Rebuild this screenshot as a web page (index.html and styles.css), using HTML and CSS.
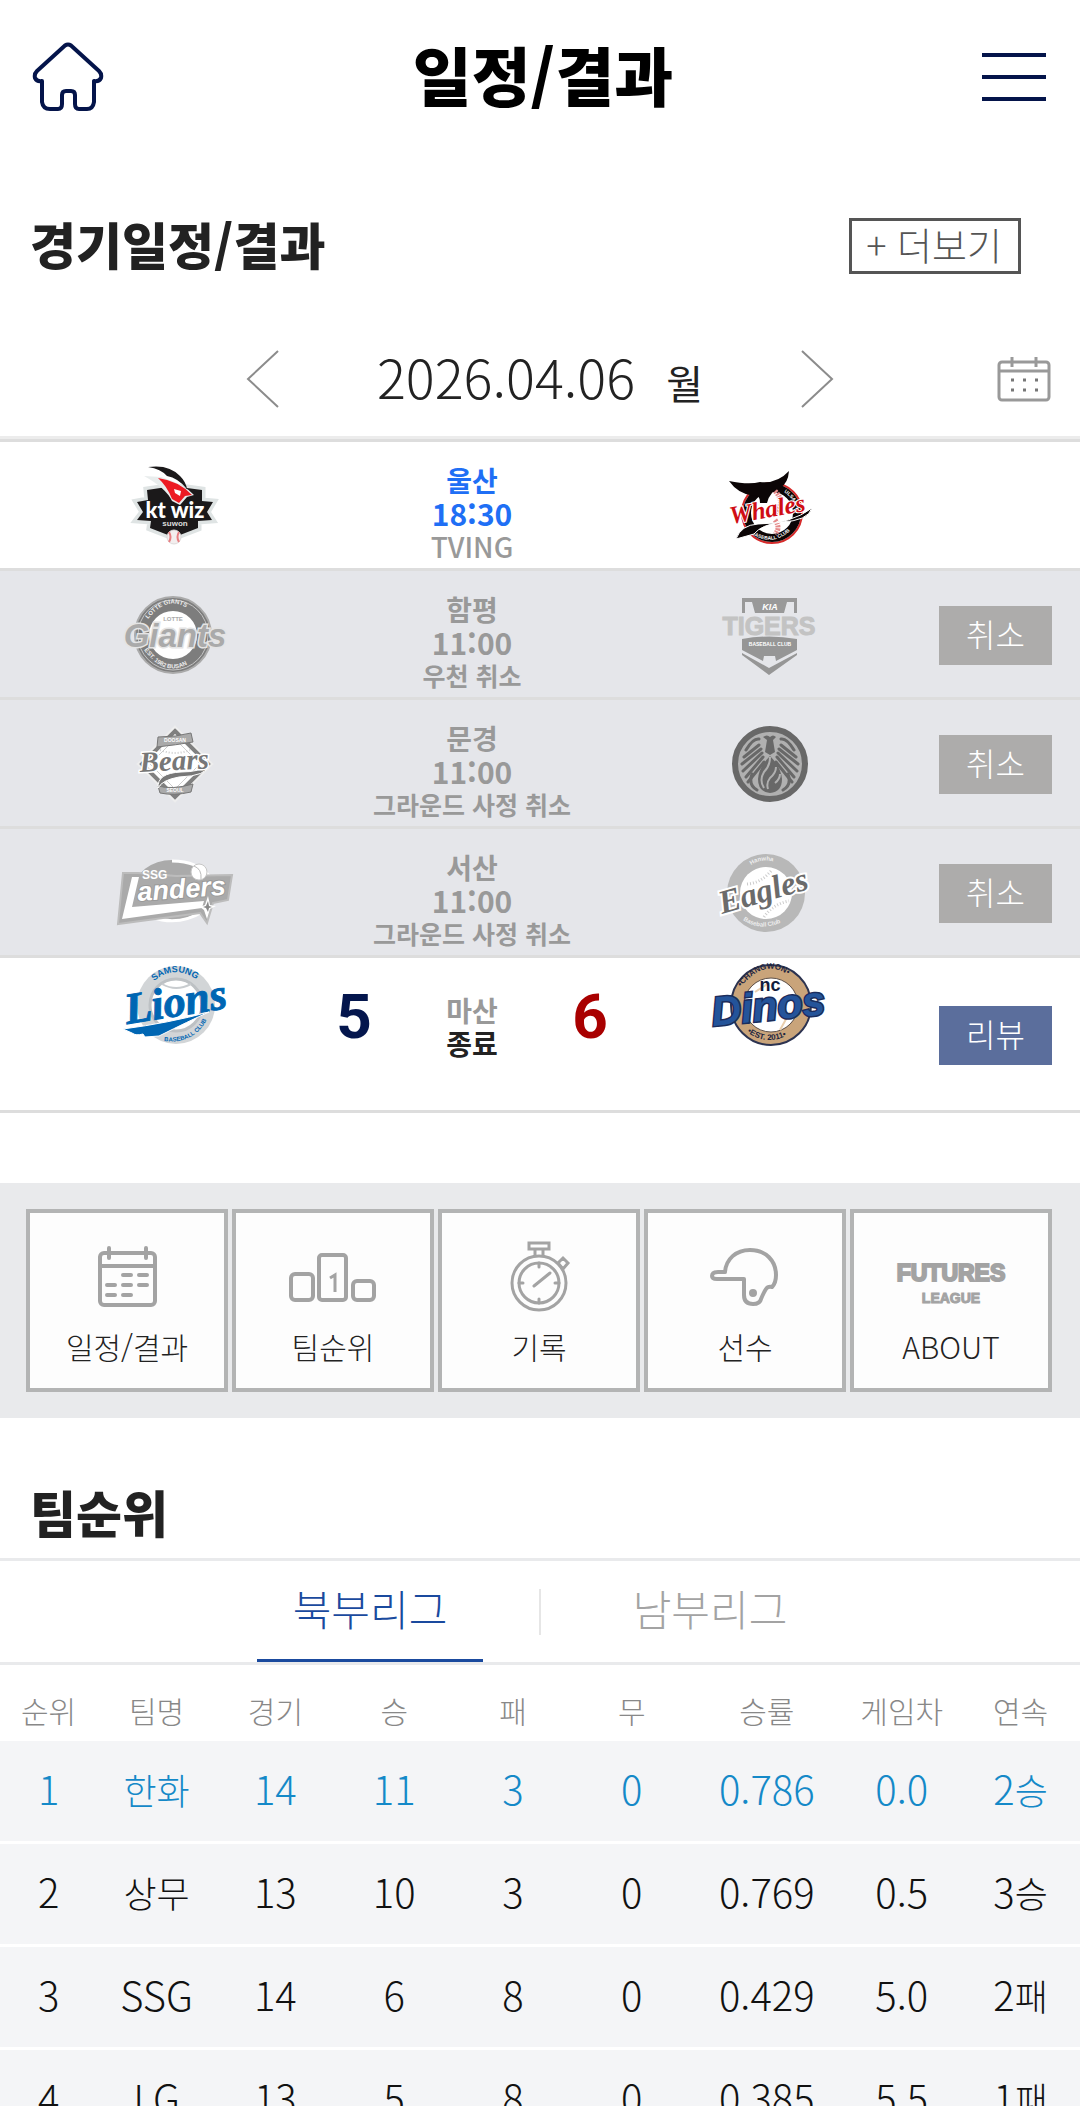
FILE: index.html
```
<!DOCTYPE html>
<html lang="ko">

<head>
    <meta charset="UTF-8">
    <meta name="viewport" content="width=device-width, initial-scale=1.0">
    <title>일정/결과</title>
    <link rel="stylesheet" href="styles.css">
</head>

<body>
    <header class="header">
        <a href="#" class="home" aria-label="홈">
            <svg width="72" height="70" viewBox="0 0 72 70" fill="none" stroke="#04144a" stroke-width="4" stroke-linejoin="round">
                <path d="M33 3.500Q36 1.500 39 3.500L67 29Q70 32 69 36Q67 40 62 39V60Q61 67 55 67H47Q43 67 43 62V53Q43 49 39 49H34Q30 49 30 53V62Q30 67 26 67H18Q11 67 10 60V39Q5 40 3 36Q2 32 5 29Z" />
            </svg>
        </a>
        <h1>일정/결과</h1>
        <button type="button" class="menu-btn" aria-label="메뉴">
            <span></span><span></span><span></span>
        </button>
    </header>

    <main>
        <section class="schedule">
            <div class="section-head">
                <h2>경기일정/결과</h2>
                <a href="#" class="more">+ 더보기</a>
            </div>

            <div class="date-nav">
                <div class="date-move">
                    <button type="button" aria-label="이전">
                        <svg width="34" height="58" viewBox="0 0 34 58" fill="none" stroke="#8c8c8c" stroke-width="2"><path d="M32 1L2 29L32 57" /></svg>
                    </button>
                    <p class="date">2026.04.06 <span>월</span></p>
                    <button type="button" aria-label="다음">
                        <svg width="34" height="58" viewBox="0 0 34 58" fill="none" stroke="#8c8c8c" stroke-width="2"><path d="M2 1L32 29L2 57" /></svg>
                    </button>
                </div>
                <button type="button" class="calendar" aria-label="달력">
                    <svg width="54" height="46" viewBox="0 0 54 46" fill="none" stroke="#999" stroke-width="3">
                        <rect x="2" y="6" width="50" height="38" rx="3" />
                        <path d="M2 15H52M15 1V11M39 1V11" />
                        <path d="M14 24H17M26 24H29M38 24H41M14 34H17M26 34H29M38 34H41" stroke="#777" />
                    </svg>
                </button>
            </div>

            <ul class="games">
                <li class="game">
                    <svg class="logo" viewBox="0 0 120 84" role="img" aria-label="KT">
                        <path fill="#1b191a" stroke="#dfe4e4" stroke-width="7" d="M33 26L53 23L73 24L88 26V37L99 38L93 48L98 56L84 57V64L66 71L60 66L54 71L36 64L37 57L23 56L29 48L23 38L34 36Z" />
                        <path fill="#1b191a" d="M33 26L53 23L73 24L88 26V37L99 38L93 48L98 56L84 57V64L66 71L60 66L54 71L36 64L37 57L23 56L29 48L23 38L34 36Z" />
                        <path fill="#e9eded" d="M30 12L47 13Q70 20 80 31L73 33L66 41L58 37Q52 24 30 12Z" />
                        <path fill="#1b191a" d="M34 3Q55 0 66 12Q72 18 73 25Q64 14 53 12Q47 5 34 3Z" />
                        <path fill="#ed1b24" d="M44 14Q65 17 78 31L71 32L65 39L58 35Q53 22 44 14Z" />
                        <path fill="#fff" d="M60 25L67 27L66 32L61 29Z" />
                        <text x="61" y="54" class="kt-name">kt wiz</text>
                        <text x="61" y="62" class="kt-city">suwon</text>
                        <circle cx="60" cy="73" r="7" fill="#f3eeee" stroke="#dddada" />
                        <path d="M55 68Q58 73 55 78M65 68Q62 73 65 78" fill="none" stroke="#e77f82" stroke-width="2" />
                    </svg>
                    <div class="info live">
                        <strong>울산</strong>
                        <span class="time">18:30</span>
                        <span class="note tv">TVING</span>
                    </div>
                    <svg class="logo away" viewBox="0 0 120 84" role="img" aria-label="Whales">
                        <circle cx="63" cy="49" r="30" fill="#fff" stroke="#d62a2a" stroke-width="2" />
                        <circle cx="63" cy="49" r="25" fill="none" stroke="#0b0506" stroke-width="8" />
                        <path d="M66 27Q77 38 66 50M66 56Q72 64 66 70" fill="none" stroke="#e58a8a" stroke-width="5" stroke-dasharray="2 1" />
                        <path id="whales-top" d="M75 28Q87 36 89 52" fill="none" />
                        <path id="whales-bottom" d="M42 70Q70 87 92 54" fill="none" />
                        <text class="tiny white"><textPath href="#whales-top">ULSAN</textPath></text>
                        <text class="tiny white"><textPath href="#whales-bottom">BASEBALL CLUB</textPath></text>
                        <path fill="#0b0506" d="M20 17Q40 21 51 18Q68 20 80 7Q79 19 72 23Q61 27 58 39H51Q51 30 45 32Q29 30 20 17Z" />
                        <path fill="#0b0506" stroke="#fff" d="M103 44Q99 57 72 58Q52 61 45 70L27 75Q32 61 49 60Q82 60 103 44Z" />
                        <text class="whales" transform="translate(22 60) rotate(-10)">Whales</text>
                    </svg>
                </li>

                <li class="game off">
                    <svg class="logo" viewBox="0 0 120 84" role="img" aria-label="Giants">
                        <circle cx="59" cy="42" r="38" fill="#7d7d7d" stroke="#aaa" stroke-width="2" />
                        <circle cx="59" cy="42" r="35" fill="none" stroke="#c6c6c6" stroke-width="1" />
                        <circle cx="59" cy="42" r="24" fill="#fff" />
                        <path id="giants-top" d="M34 26Q59 -5 84 26" fill="none" />
                        <path id="giants-bottom" d="M30 57Q59 95 90 55" fill="none" />
                        <text class="ring-text"><textPath href="#giants-top">LOTTE GIANTS</textPath></text>
                        <text class="ring-text"><textPath href="#giants-bottom">EST. 1982 BUSAN</textPath></text>
                        <text x="59" y="28" class="lotte">LOTTE</text>
                        <text x="61" y="54" class="giants">Giants</text>
                    </svg>
                    <div class="info">
                        <strong>함평</strong>
                        <span class="time">11:00</span>
                        <span class="note">우천 취소</span>
                    </div>
                    <svg class="logo away" viewBox="0 0 120 84" role="img" aria-label="Tigers">
                        <path fill="#999" d="M33 5H88V20H85V9H78L75 20H46L43 9H36V20H33Z" />
                        <text x="61" y="17" class="kia">KIA</text>
                        <path fill="#969696" d="M33 46Q60 41 88 46V57L67 68L66 63H55L54 68L33 57Z" />
                        <path fill="#969696" d="M33 60L60 75L88 60V62L60 82L33 62Z" />
                        <text x="61" y="53" class="tiny white mid">BASEBALL CLUB</text>
                        <text x="60" y="42" class="tigers">TIGERS</text>
                    </svg>
                    <button type="button" class="state">취소</button>
                </li>

                <li class="game off">
                    <svg class="logo" viewBox="0 0 120 84" role="img" aria-label="Bears">
                        <path d="M61 9L94 42L61 75L28 42Z" fill="#fff" stroke="#eee" stroke-width="8" />
                        <path d="M61 9L94 42L61 75L28 42Z" fill="#fff" stroke="#808080" stroke-width="4" />
                        <path d="M61 17L86 42L61 67L36 42Z" fill="#fff" stroke="#ccc" />
                        <path d="M46 28Q61 34 76 28M50 60Q62 50 75 54" fill="none" stroke="#ccc" stroke-width="2" stroke-dasharray="1 2" />
                        <path d="M44 15Q62 15 77 11L79 20Q62 23 43 25Z" fill="#aaa" stroke="#777" />
                        <path d="M44 64Q58 68 79 62L77 70Q60 74 46 71Z" fill="#aaa" stroke="#777" />
                        <text x="61" y="20" class="tiny white mid">DOOSAN</text>
                        <text x="61" y="70" class="tiny white mid">SEOUL</text>
                        <path d="M95 43Q86 50 67 50Q43 51 44 66Q48 58 65 55Q93 54 95 43Z" fill="#777" stroke="#fff" />
                        <text class="bears" transform="translate(26 50) rotate(-3)">Bears</text>
                    </svg>
                    <div class="info">
                        <strong>문경</strong>
                        <span class="time">11:00</span>
                        <span class="note">그라운드 사정 취소</span>
                    </div>
                    <svg class="logo away" viewBox="0 0 120 84" role="img" aria-label="상무">
                        <circle cx="61" cy="42" r="35" fill="#b0b0b0" stroke="#686868" stroke-width="6" />
                        <g fill="none" stroke="#686868" stroke-width="3" stroke-linecap="round">
                            <path d="M50 17Q44 16 37 28M50 23L35 35M52 27L33 42M53 31L34 49M54 35L37 55M55 40L39 60" />
                            <path d="M72 17Q78 16 85 28M72 23L87 35M70 27L89 42M69 31L88 49M68 35L85 55M67 40L83 60" />
                            <path d="M43 52Q39 63 48 68M79 52Q83 63 74 68" />
                        </g>
                        <path fill="#686868" d="M54 15Q58 12 61 15Q64 12 67 15L64 18L66 30L61 33L56 30L58 18Z" />
                        <path fill="#686868" d="M61 34Q50 45 49 57Q49 70 61 71Q73 70 73 57Q72 45 61 34Z" />
                        <path d="M61 35Q61 44 55 50Q50 58 55 66M67 45Q67 51 61 56Q57 61 59 67M71 52Q71 57 66 61" fill="none" stroke="#b0b0b0" stroke-width="2" />
                    </svg>
                    <button type="button" class="state">취소</button>
                </li>

                <li class="game off">
                    <svg class="logo" viewBox="0 0 120 84" role="img" aria-label="SSG">
                        <ellipse cx="58" cy="39" rx="38" ry="30" fill="#aaa" />
                        <path d="M58 10Q84 10 96 26M38 66Q64 76 90 60" fill="none" stroke="#fff" stroke-width="3" />
                        <path d="M9 22H24L62 25L118 24L114 49L99 52L93 72L86 62L4 73Z" fill="#aaa" stroke="#bcbcbc" stroke-width="2" />
                        <path d="M18 26H25L18 56L90 50L88 57L8 68Z" fill="#fff" />
                        <path d="M94 45L96 54L102 55L96 58L93 68L90 59L86 56L91 54Z" fill="#fff" />
                        <path d="M94 50L95 55L98 56L95 57L94 61L92 57L89 56L92 55Z" fill="#888" />
                        <circle cx="85" cy="21" r="8" fill="#fff" stroke="#c6c6c6" />
                        <path d="M80 15Q88 18 87 28" fill="none" stroke="#bbb" />
                        <text x="28" y="28" class="ssg">SSG</text>
                        <text class="landers" transform="translate(24 50) rotate(-4)">anders</text>
                    </svg>
                    <div class="info">
                        <strong>서산</strong>
                        <span class="time">11:00</span>
                        <span class="note">그라운드 사정 취소</span>
                    </div>
                    <svg class="logo away" viewBox="0 0 120 84" role="img" aria-label="Eagles">
                        <circle cx="57" cy="42" r="39" fill="#b8b8b8" />
                        <circle cx="57" cy="42" r="26" fill="#fff" />
                        <path d="M38 33Q52 32 62 20M55 66Q64 53 80 50" fill="none" stroke="#ccc" stroke-width="3" stroke-dasharray="1 2" />
                        <path id="eagles-top" d="M42 14Q57 4 77 16" fill="none" />
                        <path id="eagles-bottom" d="M34 69Q57 85 88 62" fill="none" />
                        <text class="ring-text"><textPath href="#eagles-top">Hanwha</textPath></text>
                        <text class="ring-text"><textPath href="#eagles-bottom">Baseball Club</textPath></text>
                        <text class="eagles" transform="translate(13 63) rotate(-16)">Eagles</text>
                    </svg>
                    <button type="button" class="state">취소</button>
                </li>

                <li class="game end">
                    <svg class="logo" viewBox="0 0 120 84" role="img" aria-label="Lions">
                        <circle cx="62" cy="43" r="39" fill="#d2d5d7" />
                        <circle cx="62" cy="43" r="26" fill="#fff" stroke="#bdc1c4" stroke-width="3" />
                        <path d="M48 22Q62 30 77 22" fill="none" stroke="#c8cccf" stroke-width="2" />
                        <path id="lions-top" d="M40 19Q62 1 86 20" fill="none" />
                        <path id="lions-bottom" d="M50 79Q84 83 96 50" fill="none" />
                        <text class="lions-ring"><textPath href="#lions-top">SAMSUNG</textPath></text>
                        <text class="lions-small"><textPath href="#lions-bottom">BASEBALL CLUB</textPath></text>
                        <text class="lions" transform="translate(13 62) rotate(-9)">Lions</text>
                        <path fill="#0066b3" stroke="#fff" stroke-width="1" d="M9 67Q55 61 95 50Q75 59 45 74L31 75L29 72Q22 74 18 71Z" />
                    </svg>
                    <b class="score">5</b>
                    <div class="info">
                        <strong>마산</strong>
                        <strong class="done">종료</strong>
                    </div>
                    <b class="score win">6</b>
                    <svg class="logo away" viewBox="0 0 120 84" role="img" aria-label="Dinos">
                        <circle cx="62" cy="43" r="40" fill="#c9a47a" stroke="#2c3350" stroke-width="2" />
                        <circle cx="62" cy="43" r="27" fill="#fff" stroke="#5d5048" />
                        <path d="M46 30L60 21M71 68L81 50" stroke="#e9cfae" stroke-width="2" />
                        <path id="dinos-top" d="M32 25Q62 -13 94 28" fill="none" />
                        <path id="dinos-bottom" d="M38 70Q62 88 90 66" fill="none" />
                        <text class="dinos-ring"><textPath href="#dinos-top">•CHANGWON•</textPath></text>
                        <text class="dinos-ring"><textPath href="#dinos-bottom">•EST. 2011•</textPath></text>
                        <text x="61" y="29" class="nc">nc</text>
                        <text class="dinos" transform="translate(4 64) rotate(-6)">Dinos</text>
                    </svg>
                    <button type="button" class="state review">리뷰</button>
                </li>
            </ul>
        </section>

        <nav class="quick">
            <a href="#">
                <svg width="90" height="72" viewBox="0 0 90 72" fill="none" stroke="#a3a3a3" stroke-width="4" stroke-linecap="round">
                    <rect x="18" y="12" width="55" height="52" rx="4" />
                    <path d="M18 25H73M27 7V17M64 7V17" />
                    <path d="M41 34H49M57 34H65M25 44H33M41 44H49M57 44H65M25 54H33M41 54H49" />
                </svg>
                <span>일정/결과</span>
            </a>
            <a href="#">
                <svg width="90" height="72" viewBox="0 0 90 72" fill="none" stroke="#a3a3a3" stroke-width="4">
                    <rect x="3" y="33" width="22" height="26" rx="4" />
                    <rect x="31" y="14" width="27" height="45" rx="3" />
                    <rect x="65" y="40" width="21" height="19" rx="4" />
                    <path d="M42 37L47 34V51" stroke-width="3" />
                </svg>
                <span>팀순위</span>
            </a>
            <a href="#">
                <svg width="90" height="72" viewBox="0 0 90 72" fill="none" stroke="#a3a3a3" stroke-width="3">
                    <circle cx="45" cy="42" r="27" />
                    <circle cx="45" cy="42" r="20" />
                    <path d="M35 2H55V8H35ZM41 8V14M49 8V14M40 45L56 32M45 22V26M45 58V62M25 42H29M61 42H65M64 22L69 17L74 22L69 28Z" stroke-linecap="round" />
                </svg>
                <span>기록</span>
            </a>
            <a href="#">
                <svg width="90" height="72" viewBox="0 0 90 72" fill="none" stroke="#a3a3a3" stroke-width="4" stroke-linejoin="round">
                    <path d="M25 31C26 18 36 9 50 9C66 9 76 20 76 34Q76 42 72 46Q68 45 66 48Q64 51 61 58Q60 63 53 63Q44 63 44 54V38H17Q12 38 12 35Q12 31 18 31Z" />
                    <circle cx="53" cy="52" r="2" />
                </svg>
                <span>선수</span>
            </a>
            <a href="#">
                <svg width="120" height="72" viewBox="0 0 120 72" aria-hidden="true">
                    <text x="60" y="40" class="futures">FUTURES</text>
                    <text x="60" y="62" class="league">LEAGUE</text>
                </svg>
                <span>ABOUT</span>
            </a>
        </nav>

        <section class="ranking">
            <h2>팀순위</h2>
            <div class="tabs">
                <button type="button" class="tab active">북부리그</button>
                <i class="bar"></i>
                <button type="button" class="tab">남부리그</button>
            </div>
            <table>
                <colgroup>
                    <col class="c-rank"><col><col><col><col><col><col class="c-pct"><col><col>
                </colgroup>
                <thead>
                    <tr>
                        <th scope="col">순위</th>
                        <th scope="col">팀명</th>
                        <th scope="col">경기</th>
                        <th scope="col">승</th>
                        <th scope="col">패</th>
                        <th scope="col">무</th>
                        <th scope="col">승률</th>
                        <th scope="col">게임차</th>
                        <th scope="col">연속</th>
                    </tr>
                </thead>
                <tbody>
                    <tr class="my">
                        <td>1</td><td><span class="ko">한화</span></td><td>14</td><td>11</td><td>3</td><td>0</td><td>0.786</td><td>0.0</td><td>2<span class="ko">승</span></td>
                    </tr>
                    <tr>
                        <td>2</td><td><span class="ko">상무</span></td><td>13</td><td>10</td><td>3</td><td>0</td><td>0.769</td><td>0.5</td><td>3<span class="ko">승</span></td>
                    </tr>
                    <tr>
                        <td>3</td><td>SSG</td><td>14</td><td>6</td><td>8</td><td>0</td><td>0.429</td><td>5.0</td><td>2<span class="ko">패</span></td>
                    </tr>
                    <tr>
                        <td>4</td><td>LG</td><td>13</td><td>5</td><td>8</td><td>0</td><td>0.385</td><td>5.5</td><td>1<span class="ko">패</span></td>
                    </tr>
                </tbody>
            </table>
        </section>
    </main>
</body>

</html>
```
FILE: styles.css
```
* {
    box-sizing: border-box;
    margin: 0;
    padding: 0;
}

body {
    background: #fff;
    color: #222;
    font-family: "Noto Sans CJK KR", sans-serif;
    font-weight: 300;
}

a {
    color: inherit;
    text-decoration: none;
}

button {
    border: none;
    background: none;
    color: inherit;
    font: inherit;
    cursor: pointer;
}

svg {
    display: block;
}

ul {
    list-style: none;
}

h2 {
    padding-bottom: 6px;
    font-size: 50px;
    font-weight: 900;
    line-height: 50px;
}

/* Header */
.header {
    display: flex;
    align-items: center;
    justify-content: space-between;
    height: 154px;
    padding: 0 34px 0 32px;
}

.header h1 {
    padding-bottom: 8px;
    color: #000;
    font-size: 64px;
    font-weight: 900;
    line-height: 64px;
}

.menu-btn {
    display: flex;
    flex-direction: column;
    gap: 18px;
    width: 64px;
}

.menu-btn span {
    height: 4px;
    background: #04144a;
}

/* Schedule */
.section-head {
    display: flex;
    align-items: center;
    justify-content: space-between;
    padding: 64px 59px 0 30px;
}

.more {
    padding: 0 16px 4px 14px;
    border: 3px solid #555;
    color: #555;
    font-size: 38px;
    line-height: 46px;
}

.date-nav {
    display: grid;
    grid-template-columns: 1fr auto 1fr;
    align-items: center;
    height: 165px;
    padding: 48px 29px 0;
    border-bottom: 3px solid #ececec;
}

.date-move {
    display: flex;
    grid-column: 2;
    align-items: center;
    justify-content: space-between;
    width: 588px;
}

.date {
    font-size: 54px;
    line-height: 60px;
}

.date span {
    margin-left: 16px;
    font-size: 40px;
    font-weight: 400;
}

.calendar {
    justify-self: end;
}

.games {
    border-top: 3px solid #ddd;
}

.game {
    display: grid;
    grid-template-columns: 260fr 100fr 136fr 100fr 258fr 154fr;
    align-items: start;
    min-height: 129px;
    padding: 22px 28px 0 44px;
    border-bottom: 3px solid #ddd;
}

.game.off {
    background: #e5e6ea;
}

.logo {
    grid-column: 1;
    grid-row: 1;
    justify-self: center;
    width: 120px;
    height: 84px;
}

.logo.away {
    grid-column: 5;
}

.info {
    display: flex;
    grid-column: 3;
    grid-row: 1;
    flex-direction: column;
    align-items: center;
    min-width: 0;
    color: #999;
    font-size: 28px;
    font-weight: 700;
    line-height: 33px;
    white-space: nowrap;
}

.info strong {
    font-weight: 700;
}

.info .time {
    font-size: 30px;
}

.info .note {
    font-size: 25px;
}

.info .tv {
    font-size: 28px;
    font-weight: 500;
}

.live strong,
.live .time {
    color: #1f6ff5;
}

.state {
    grid-column: 6;
    grid-row: 1;
    justify-self: end;
    width: 113px;
    height: 59px;
    margin-top: 13px;
    padding-bottom: 6px;
    background: #adacab;
    color: #fff;
    font-size: 32px;
    line-height: 50px;
}

.game.end {
    min-height: 155px;
    padding-top: 4px;
}

.end .info {
    padding-top: 32px;
}

.end .state {
    margin-top: 44px;
    background: #5b6e9c;
}

.info .done {
    color: #222;
}

.score {
    grid-column: 2;
    grid-row: 1;
    padding-top: 22px;
    color: #04164d;
    font-family: Roboto, sans-serif;
    font-size: 62px;
    font-weight: 700;
    line-height: 66px;
    text-align: center;
}

.score.win {
    grid-column: 4;
    color: #a90000;
}

/* Team logo lettering */
.logo text {
    font-family: "Liberation Sans", sans-serif;
    font-weight: 700;
}

.logo .tiny {
    font-size: 5px;
}

.logo .white {
    fill: #fff;
}

.logo .mid,
.logo .kt-name,
.logo .kt-city,
.logo .lotte,
.logo .giants,
.logo .kia,
.logo .tigers,
.logo .nc {
    text-anchor: middle;
}

.logo .kt-name {
    fill: #fff;
    font-family: Lato, sans-serif;
    font-size: 22px;
    font-weight: 900;
}

.logo .kt-city {
    fill: #ddd;
    font-size: 8px;
}

.logo .whales {
    fill: #d00d14;
    stroke: #fff;
    stroke-width: 2px;
    paint-order: stroke;
    font-family: "Liberation Serif", serif;
    font-size: 25px;
    font-style: italic;
}

.logo .ring-text {
    fill: #eee;
    font-size: 6px;
}

.logo .lotte {
    fill: #aaa;
    font-size: 6px;
}

.logo .giants {
    fill: #aaa;
    stroke: #e4e4e4;
    stroke-width: 3px;
    paint-order: stroke;
    font-size: 33px;
    font-style: italic;
}

.logo .kia {
    fill: #fff;
    font-size: 9px;
    font-style: italic;
}

.logo .tigers {
    fill: #c3c3c3;
    stroke: #c3c3c3;
    stroke-width: 1px;
    font-size: 25px;
}

.logo .bears {
    fill: #777;
    stroke: #fff;
    stroke-width: 3px;
    paint-order: stroke;
    font-family: "Liberation Serif", serif;
    font-size: 29px;
    font-style: italic;
}

.logo .ssg {
    fill: #fff;
    font-size: 12px;
}

.logo .landers {
    fill: #fff;
    stroke: #999;
    stroke-width: 2px;
    paint-order: stroke;
    font-size: 27px;
    font-style: italic;
}

.logo .eagles {
    fill: #6b6b6b;
    stroke: #fff;
    stroke-width: 4px;
    paint-order: stroke;
    font-family: "Liberation Serif", serif;
    font-size: 33px;
    font-style: italic;
}

.logo .lions {
    fill: #0066b3;
    stroke: #0066b3;
    stroke-width: 1px;
    font-family: "Liberation Serif", serif;
    font-size: 44px;
    font-style: italic;
}

.logo .lions-ring {
    fill: #0066b3;
    font-size: 9px;
}

.logo .lions-small {
    fill: #0066b3;
    font-size: 6px;
}

.logo .dinos-ring {
    fill: #1d2440;
    font-size: 8px;
}

.logo .nc {
    fill: #111c3d;
    font-size: 18px;
}

.logo .dinos {
    fill: #24549a;
    stroke: #1b2d5c;
    stroke-width: 3px;
    paint-order: stroke;
    font-size: 41px;
    font-style: italic;
}

/* Quick menu */
.quick {
    display: flex;
    gap: 4px;
    margin-top: 70px;
    padding: 26px 28px 26px 26px;
    background: #e9eaec;
}

.quick a {
    display: flex;
    flex: 1;
    flex-direction: column;
    align-items: center;
    gap: 15px;
    padding: 28px 0 24px;
    border: 4px solid #b3b4b4;
    background: #fdfdfd;
    font-size: 30px;
    line-height: 36px;
}

.futures,
.league {
    fill: #a3a3a3;
    stroke: #a3a3a3;
    stroke-width: 1px;
    font-family: "Liberation Sans", sans-serif;
    font-weight: 700;
    text-anchor: middle;
}

.futures {
    stroke-width: 2px;
    font-size: 23px;
}

.league {
    font-size: 14px;
}

/* Ranking */
.ranking h2 {
    padding: 68px 30px 22px;
    border-bottom: 3px solid #e9eaec;
}

.tabs {
    display: flex;
    align-items: center;
    justify-content: center;
    border-bottom: 3px solid #e9eaec;
}

.tab {
    width: 226px;
    height: 101px;
    margin: 0 56px;
    padding-bottom: 4px;
    border-bottom: 3px solid transparent;
    color: #a3a3a3;
    font-size: 42px;
    line-height: 94px;
}

.tab.active {
    border-color: #1a4a9e;
    color: #1a4a9e;
}

.bar {
    width: 2px;
    height: 46px;
    background: #e6e6e6;
}

table {
    width: 100%;
    table-layout: fixed;
    border-spacing: 0;
    text-align: center;
}

.c-rank {
    width: 9%;
}

.c-pct {
    width: 14%;
}

th {
    height: 76px;
    padding-top: 14px;
    color: #888;
    font-size: 30px;
    font-weight: 300;
    line-height: 36px;
}

td {
    height: 103px;
    padding-bottom: 6px;
    border-bottom: 3px solid #fff;
    background: #f4f5f7;
    color: #111;
    font-size: 40px;
    line-height: 48px;
    white-space: nowrap;
}

td .ko {
    font-size: 36px;
}

.my td {
    color: #1489c8;
}
```
